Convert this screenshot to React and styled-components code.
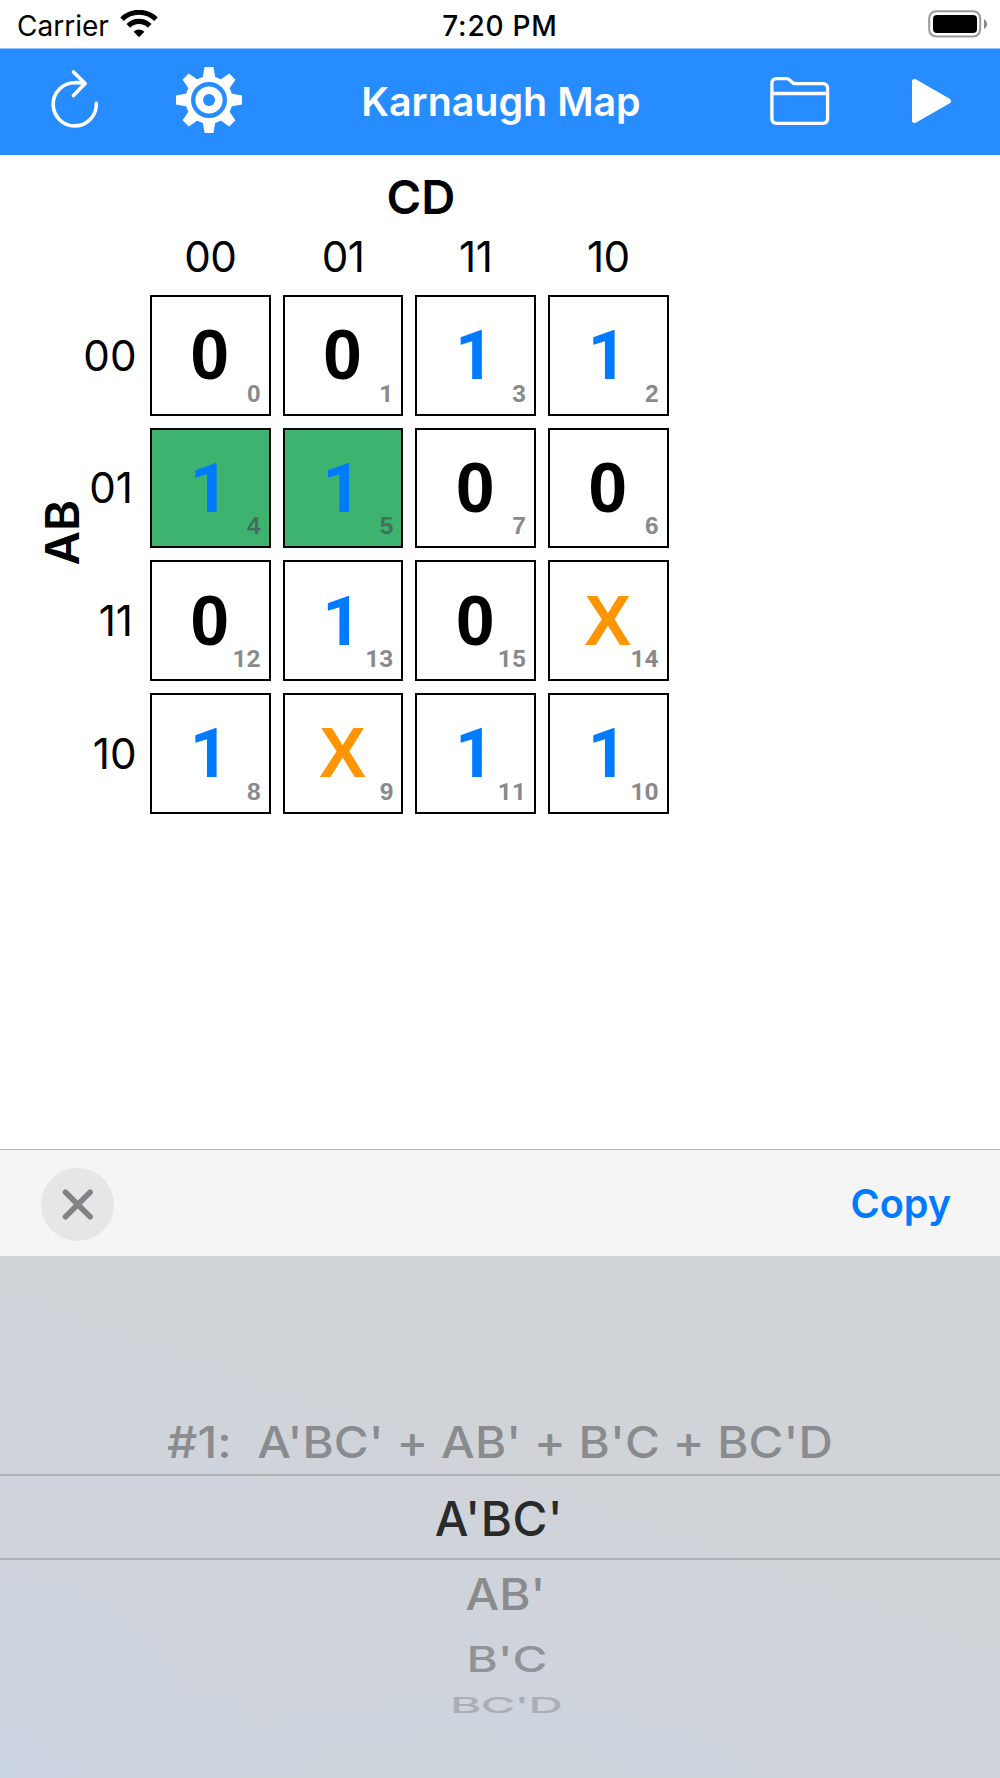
import React from "react";
import styled, { createGlobalStyle } from "styled-components";

const ui = `Inter, "Liberation Sans", sans-serif`;
const digits = `"Liberation Sans", Arial, sans-serif`;
const plainOne = `Roboto, "Liberation Sans", sans-serif`;

const GlobalStyle = createGlobalStyle`
  *, *::before, *::after { box-sizing: border-box; }
  body { margin: 0; background: #fff; }
  svg { display: block; flex: none; }
`;

const Screen = styled.main`
  display: flex;
  flex-direction: column;
  width: 1000px;
  height: 1778px;
  overflow: hidden;
  background: #fff;
  color: #000;
  font-family: ${ui};
`;

const StatusBar = styled.header`
  display: grid;
  grid-template-columns: 1fr auto 1fr;
  align-items: center;
  height: 48px;
  padding: 0 13px;
  font-size: 28px;
  line-height: 34px;
`;

const Network = styled.div`
  display: flex;
  align-items: center;
  gap: 11px;
  padding-left: 4px;
`;

const CarrierName = styled.span`
  padding-top: 4px;
`;

const Clock = styled.time`
  padding-top: 4px;
  font-weight: 500;
  letter-spacing: 0.8px;
`;

const BatterySlot = styled.div`
  display: flex;
  justify-content: flex-end;
`;

const NavBar = styled.nav`
  display: grid;
  grid-template-columns: 1fr auto 1fr;
  align-items: center;
  height: 107px;
  padding: 0 48px 0 50px;
  border-top: 1px solid #8ec4ff;
  background: #268cff;
  color: #fff;
`;

const NavGroup = styled.div`
  display: flex;
  align-items: center;
  justify-content: ${(p) => (p.$end ? "flex-end" : "flex-start")};
  gap: ${(p) => p.$gap}px;
`;

const IconButton = styled.button`
  display: flex;
  padding: 0 0 ${(p) => p.$lift}px;
  border: 0;
  background: none;
  color: inherit;
`;

const Title = styled.h1`
  margin: 0;
  font-size: 39.4px;
  font-weight: 600;
  line-height: 48px;
`;

const MapArea = styled.section`
  display: grid;
  grid-template-columns: 76px 74px auto;
  grid-template-rows: 76px 64px auto;
  flex: 1;
  align-content: start;
  justify-content: start;
`;

const ColumnVariable = styled.div`
  grid-column: 3;
  padding: 13px 0 0 23px;
  text-align: center;
  font-size: 47.2px;
  font-weight: 600;
  line-height: 58px;
`;

const ColumnCodes = styled.div`
  grid-column: 3;
  display: grid;
  grid-template-columns: repeat(4, 120.67px);
  gap: 12px;
`;

const Code = styled.span`
  display: block;
  padding: 1px ${(p) => (p.$row ? (p.$code.endsWith("1") ? 17 : 13.5) : 0)}px 0 0;
  font-size: 42.2px;
  line-height: 50px;
  letter-spacing: ${(p) => (p.$row ? 0 : -0.6)}px;
  text-align: ${(p) => (p.$row ? "right" : "center")};
`;

const RowVariable = styled.div`
  grid-column: 1;
  grid-row: 3;
  display: flex;
  align-items: center;
  padding: 0 0 43px 35px;
`;

const Upright = styled.span`
  writing-mode: vertical-rl;
  transform: rotate(180deg);
  font-size: 47.2px;
  font-weight: 600;
  line-height: 54px;
`;

const RowCodes = styled.div`
  grid-column: 2;
  grid-row: 3;
  display: grid;
  grid-template-rows: repeat(4, 120.67px);
  gap: 12px;
  align-items: center;
`;

const Cells = styled.div`
  grid-column: 3;
  grid-row: 3;
  display: grid;
  grid-template-columns: repeat(4, 120.67px);
  grid-template-rows: repeat(4, 120.67px);
  gap: 12px;
`;

const Cell = styled.div`
  display: grid;
  place-items: center;
  border: 2px solid #000;
  background: ${(p) => (p.$marked ? "#3eb370" : "#fff")};
`;

const valueColors = { 0: "#000", 1: "#007aff", X: "#ff9500" };

const Value = styled.span`
  grid-area: 1 / 1;
  padding: ${(p) => (p.$value === "1" ? "2px 2px 0 0" : "0 1px 0 0")};
  font-family: ${(p) => (p.$value === "1" ? plainOne : digits)};
  font-size: ${(p) => (p.$value === "1" ? 68.5 : 70)}px;
  font-weight: 700;
  line-height: 80px;
  color: ${(p) => valueColors[p.$value]};
`;

const Index = styled.span`
  grid-area: 1 / 1;
  place-self: end;
  padding: 0 8px 6px 0;
  font-family: ${(p) => (p.$plain ? plainOne : digits)};
  font-size: 24.5px;
  font-weight: 700;
  line-height: 28px;
  color: ${(p) => (p.$marked ? "#42705a" : "#8a8a8e")};
`;

const Toolbar = styled.div`
  display: flex;
  align-items: center;
  justify-content: space-between;
  height: 107px;
  padding: 3px 49px 0 41px;
  border-top: 1px solid #b9b9bb;
  background: #f5f5f5;
`;

const CloseButton = styled.button`
  display: grid;
  place-items: center;
  width: 73px;
  height: 73px;
  padding: 0;
  border: 0;
  border-radius: 50%;
  background: #e6e6e6;
`;

const CopyButton = styled.button`
  padding: 0 0 2px;
  border: 0;
  background: none;
  color: #007aff;
  font: 600 39.6px/48px ${ui};
`;

const Picker = styled.div`
  display: flex;
  flex-direction: column;
  align-items: center;
  height: 522px;
  padding-top: 152px;
  background:
    radial-gradient(ellipse 260px 260px at 0 100%, rgba(200, 212, 226, 0.7), transparent),
    radial-gradient(ellipse 420px 110px at 46% 100%, rgba(202, 213, 220, 0.7), transparent),
    linear-gradient(200deg, #d0d4d8 40%, #cfd3dc 62%);
`;

const Option = styled.div`
  display: flex;
  align-items: center;
  justify-content: center;
  width: 100%;
  height: ${(p) => p.$height}px;
  padding-top: ${(p) => p.$drop || 0}px;
  padding-left: ${(p) => p.$shift || 0}px;
  color: ${(p) => p.$color};
  font-size: 47.6px;
  font-weight: 500;
  line-height: 58px;
  white-space: pre;
  ${(p) => p.$selected && "padding: 4px 2px 0 0; border-top: 2px solid #aeb0b4; border-bottom: 2px solid #aeb0b4;"}
`;

const OptionText = styled.span`
  letter-spacing: ${(p) => p.$spacing || 0}px;
  transform: scaleY(${(p) => p.$squash || 1});
`;

const WifiIcon = () => (
  <svg width="38" height="28" viewBox="0 0 38 28" fill="none">
    <path d="M2 9.200a24.300 24.300 0 0 1 34 0" stroke="#000" strokeWidth="5" />
    <path d="M8.300 15.800a15.200 15.200 0 0 1 21.400 0" stroke="#000" strokeWidth="5.200" />
    <path d="M19 27.200l-5.400-5.400a7.700 7.700 0 0 1 10.800 0z" fill="#000" />
  </svg>
);

const BatteryIcon = () => (
  <svg width="59" height="28" viewBox="0 0 59 28">
    <rect x="1.2" y="1.2" width="51" height="25.4" rx="7" fill="none" stroke="#999" strokeWidth="2" />
    <rect x="5" y="5" width="44" height="18" rx="4" fill="#000" />
    <path d="M56 9.300c4 1.800 4 8 0 9.800z" fill="#888" />
  </svg>
);

const ReloadIcon = () => (
  <svg width="50" height="60" viewBox="0 0 50 60" fill="none" stroke="#fff" strokeWidth="3.6" strokeLinecap="round" strokeLinejoin="round">
    <path d="M46.300 34.300A21.600 21.600 0 1 1 24.700 13.700Q29.500 13.300 35 14.400" />
    <path d="M23.500 3l11.600 11.600-11.600 12" />
  </svg>
);

const GearIcon = () => (
  <svg width="68" height="68" viewBox="-34 -34 68 68" fill="#fff">
    <circle r="23.700" />
    {[0, 45, 90, 135, 180, 225, 270, 315].map((a) => (
      <path key={a} transform={`rotate(${a})`} d="M-4.400-33h8.800l2 11h-12.800z" />
    ))}
    <circle r="15.800" fill="none" stroke="#268cff" strokeWidth="4.400" />
    <circle r="6" fill="#268cff" />
  </svg>
);

const FolderIcon = () => (
  <svg width="60" height="48" viewBox="0 0 60 48" fill="none" stroke="#fff" strokeWidth="3.3" strokeLinejoin="round">
    <path d="M1.900 6.400q0-4.700 4.700-4.700h10.200c4 0 4.200 5 8.400 5h27.500q4.900 0 4.900 4.900v30q0 4.700-4.700 4.700h-46.300q-4.700 0-4.700-4.700z" />
    <path d="M2 16.500h55.500" />
  </svg>
);

const PlayIcon = () => (
  <svg width="41" height="46" viewBox="0 0 41 46" fill="#fff" stroke="#fff" strokeWidth="5" strokeLinejoin="round">
    <path d="M3.500 3.500v39L37.500 23z" />
  </svg>
);

const CloseIcon = () => (
  <svg width="32" height="32" viewBox="0 0 32 32" stroke="#838387" strokeWidth="5.6" strokeLinecap="round">
    <path d="M3.500 3.200l24.600 24.600M28.100 3.200l-24.600 24.600" />
  </svg>
);

const codes = ["00", "01", "11", "10"];

const cells = [
  ["0", 0], ["0", 1], ["1", 3], ["1", 2],
  ["1", 4], ["1", 5], ["0", 7], ["0", 6],
  ["0", 12], ["1", 13], ["0", 15], ["X", 14],
  ["1", 8], ["X", 9], ["1", 11], ["1", 10],
];

const marked = [4, 5];

const options = [
  { text: "#1:  A'BC' + AB' + B'C + BC'D", height: 66, drop: 2, squash: 0.93, spacing: 0.08, color: "#8a8b8e" },
  { text: "A'BC'", height: 86, spacing: 0.5, color: "#2a2a2b", selected: true },
  { text: "AB'", height: 68, shift: 11, squash: 0.93, color: "#8a8b8e" },
  { text: "B'C", height: 62, drop: 1, shift: 14, squash: 0.73, color: "#919398" },
  { text: "BC'D", height: 29, shift: 12, squash: 0.46, spacing: -0.9, color: "#abaeb6" },
];

export default function App() {
  return (
    <Screen>
      <GlobalStyle />
      <StatusBar>
        <Network>
          <CarrierName>Carrier</CarrierName>
          <WifiIcon />
        </Network>
        <Clock>7:20 PM</Clock>
        <BatterySlot>
          <BatteryIcon />
        </BatterySlot>
      </StatusBar>
      <NavBar>
        <NavGroup $gap={75}>
          <IconButton aria-label="Reset" $lift={7}><ReloadIcon /></IconButton>
          <IconButton aria-label="Settings" $lift={4}><GearIcon /></IconButton>
        </NavGroup>
        <Title>Karnaugh Map</Title>
        <NavGroup $end $gap={81}>
          <IconButton aria-label="Open" $lift={2}><FolderIcon /></IconButton>
          <IconButton aria-label="Solve" $lift={2}><PlayIcon /></IconButton>
        </NavGroup>
      </NavBar>
      <MapArea>
        <ColumnVariable>CD</ColumnVariable>
        <ColumnCodes>
          {codes.map((c) => <Code key={c} $code={c}>{c}</Code>)}
        </ColumnCodes>
        <RowVariable><Upright>AB</Upright></RowVariable>
        <RowCodes>
          {codes.map((c) => <Code key={c} $code={c} $row>{c}</Code>)}
        </RowCodes>
        <Cells>
          {cells.map(([value, index]) => (
            <Cell key={index} $marked={marked.includes(index)}>
              <Value $value={value}>{value}</Value>
              <Index $plain={String(index).includes("1")} $marked={marked.includes(index)}>{index}</Index>
            </Cell>
          ))}
        </Cells>
      </MapArea>
      <Toolbar>
        <CloseButton aria-label="Close"><CloseIcon /></CloseButton>
        <CopyButton>Copy</CopyButton>
      </Toolbar>
      <Picker>
        {options.map((o) => (
          <Option key={o.text} $height={o.height} $drop={o.drop} $shift={o.shift} $color={o.color} $selected={o.selected}>
            <OptionText $squash={o.squash} $spacing={o.spacing}>{o.text}</OptionText>
          </Option>
        ))}
      </Picker>
    </Screen>
  );
}
